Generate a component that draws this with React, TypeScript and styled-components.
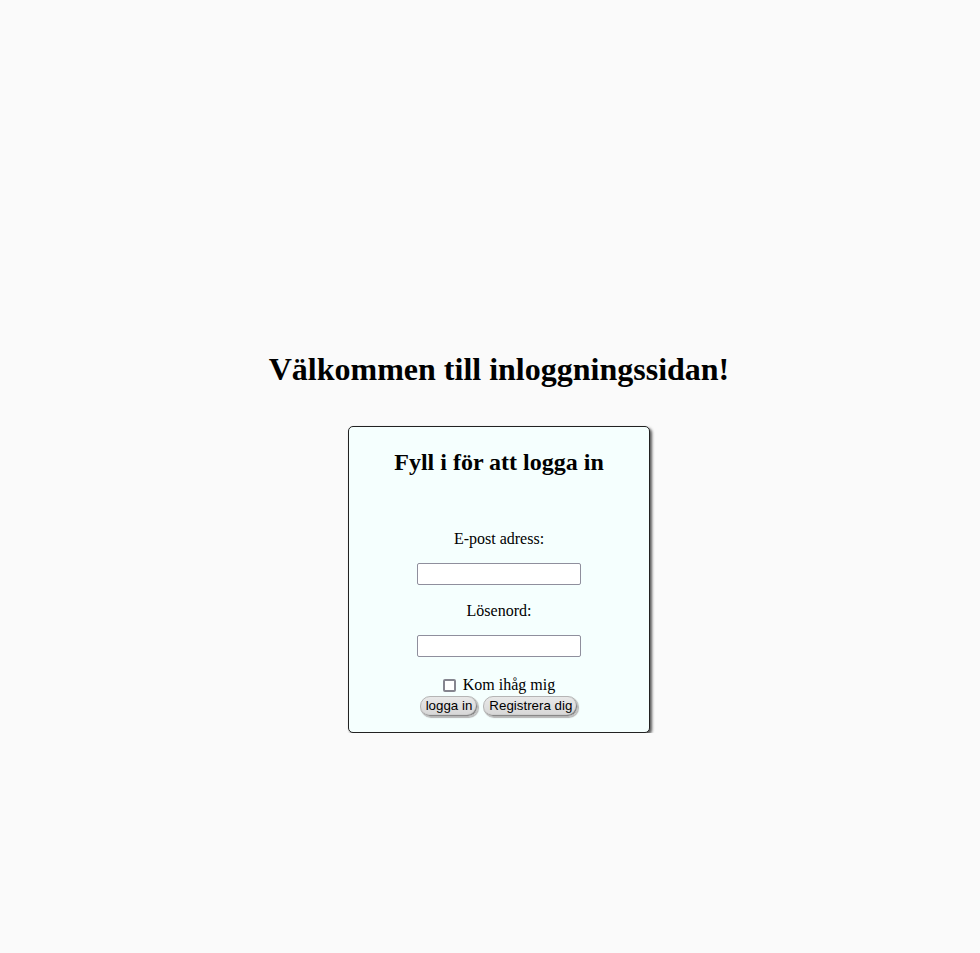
import React from "react";
import styled, { createGlobalStyle } from "styled-components";

const Global = createGlobalStyle`
  html, body { margin: 0; padding: 0; background: #fafafa; }
  body { font-family: "Liberation Serif", "Times New Roman", serif; color: #000; }
`;

const Page = styled.main`
  display: flex;
  flex-direction: column;
  align-items: center;
  padding-top: 351px;
  padding-left: 18px;
`;

const Title = styled.h1`
  margin: 0;
  font-size: 32px;
  line-height: 37px;
  font-weight: bold;
`;

const Card = styled.section`
  margin-top: 38px;
  width: 300px;
  border: 1px solid #222;
  border-radius: 5px;
  background: #f5fffe;
  box-shadow: 2px 2px 3px rgba(0, 0, 0, 0.65);
  display: flex;
  flex-direction: column;
  align-items: center;
  padding: 21px 0 15px;
`;

const CardTitle = styled.h2`
  margin: 0;
  font-size: 24px;
  line-height: 28px;
  font-weight: bold;
`;

const Form = styled.form`
  display: flex;
  flex-direction: column;
  align-items: center;
  margin-top: 54px;
`;

const Label = styled.label<{ $gap?: number }>`
  font-size: 16px;
  line-height: 18px;
  margin-top: ${(p) => p.$gap ?? 0}px;
`;

const Input = styled.input`
  margin-top: 15px;
  box-sizing: border-box;
  width: 164px;
  height: 22px;
  border: 1px solid #8f8f9d;
  border-radius: 2px;
  background: #fff;
  padding: 1px 3px;
  font-size: 13px;
`;

const CheckRow = styled.label`
  margin-top: 19px;
  display: flex;
  align-items: center;
  gap: 7px;
  font-size: 16px;
  line-height: 18px;
`;

const Box = styled.span`
  display: inline-block;
  width: 9px;
  height: 9px;
  border: 2px solid #85858f;
  border-radius: 2px;
  background: #fff;
`;

const Buttons = styled.div`
  margin-top: 2px;
  display: flex;
  gap: 5px;
`;

const Button = styled.button`
  height: 21px;
  padding: 0 5px 1px 5px;
  border: 1px solid #b5b5b5;
  border-radius: 10px;
  background: linear-gradient(#e8e8e8, #d6d6d6);
  box-shadow: inset -1px -1px 1px #808080, 1px 1px 1px #b5b5b5;
  font-family: "Liberation Sans", Arial, sans-serif;
  font-size: 13.33px;
  color: #000;
  line-height: 18px;
`;

export default function App() {
  return (
    <>
      <Global />
      <Page>
        <Title>Välkommen till inloggningssidan!</Title>
        <Card>
          <CardTitle>Fyll i för att logga in</CardTitle>
          <Form onSubmit={(e) => e.preventDefault()}>
            <Label>E-post adress:</Label>
            <Input type="email" />
            <Label $gap={17}>Lösenord:</Label>
            <Input type="password" />
            <CheckRow>
              <Box />
              Kom ihåg mig
            </CheckRow>
            <Buttons>
              <Button type="submit">logga in</Button>
              <Button type="button">Registrera dig</Button>
            </Buttons>
          </Form>
        </Card>
      </Page>
    </>
  );
}
